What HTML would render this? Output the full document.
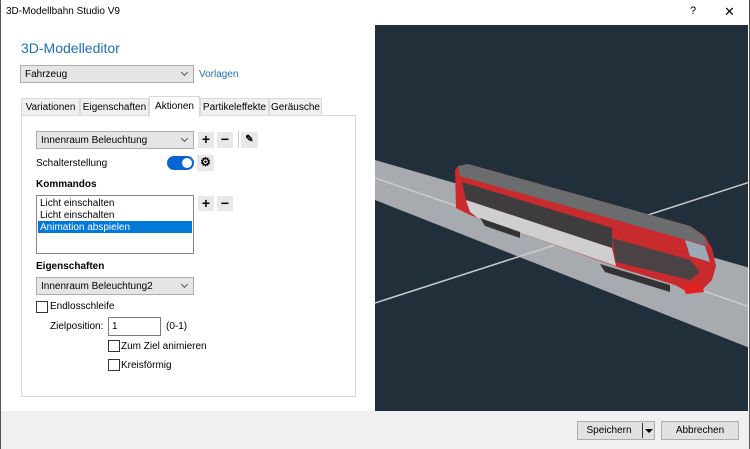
<!DOCTYPE html>
<html><head><meta charset="utf-8"><style>
*{box-sizing:border-box;margin:0;padding:0}
body{width:750px;height:449px;overflow:hidden;background:#fff;font-family:"Liberation Sans",sans-serif;font-size:10px;color:#000;position:relative}
.a{position:absolute;white-space:nowrap}
.combo{position:absolute;background:#e5e5e5;border:1px solid #adadad;padding:3px 4px;font-size:10px;line-height:11px}
.combo:after{content:"";position:absolute;right:6px;top:4px;width:4px;height:4px;border-right:1px solid #555;border-bottom:1px solid #555;transform:rotate(45deg)}
.btn{position:absolute;background:#e8e8e8;text-align:center;font-weight:bold;font-size:14px;line-height:15px}
.tab{position:absolute;top:98px;height:18px;border:1px solid #d9d9d9;border-bottom:none;background:#f0f0f0;padding:3px 0;text-align:center;font-size:10px}
.cb{position:absolute;width:12px;height:12px;border:1px solid #333;background:#fff}
.fb{position:absolute;top:421px;height:19px;border:1px solid #adadad;background:#e1e1e1;text-align:center;line-height:17px;font-size:10px}
</style></head><body>
<div class="a" style="left:0;top:0;width:750px;height:449px;border:1px solid #555;border-top:none"></div>
<div class="a" style="left:6px;top:6px;font-size:10px">3D-Modellbahn Studio V9</div>
<div class="a" style="left:690px;top:5px;font-size:11px">?</div>
<div class="a" style="left:724px;top:4px;font-size:13px">✕</div>
<div class="a" style="left:21px;top:40px;font-size:14px;color:#1e6fb8">3D-Modelleditor</div>
<div class="combo" style="left:20px;top:65px;width:174px;height:18px">Fahrzeug</div>
<div class="a" style="left:199px;top:69px;color:#1e6fb8">Vorlagen</div>
<div class="tab" style="left:21px;width:59px">Variationen</div>
<div class="tab" style="left:80px;width:69px">Eigenschaften</div>
<div class="tab" style="left:200px;width:69px">Partikeleffekte</div>
<div class="tab" style="left:269px;width:53px">Geräusche</div>
<div class="a" style="left:21px;top:115px;width:335px;height:282px;border:1px solid #d9d9d9;background:#fff"></div>
<div class="tab" style="left:149px;top:96px;width:51px;height:21px;background:#fff;z-index:2;padding-top:4px">Aktionen</div>
<div class="combo" style="left:36px;top:131px;width:158px;height:18px">Innenraum Beleuchtung</div>
<div class="btn" style="left:198px;top:132px;width:16px;height:16px">+</div>
<div class="btn" style="left:217px;top:132px;width:16px;height:16px">−</div>
<div class="a" style="left:238px;top:131px;width:1px;height:17px;background:#ccc"></div>
<div class="btn" style="left:241px;top:132px;width:17px;height:16px;font-size:10px">✎</div>
<div class="a" style="left:36px;top:158px">Schalterstellung</div>
<div class="a" style="left:167px;top:156px;width:27px;height:14px;border-radius:7px;background:#0a64d2"></div>
<div class="a" style="left:182px;top:158px;width:10px;height:10px;border-radius:5px;background:#fff"></div>
<div class="btn" style="left:197px;top:155px;width:17px;height:16px;font-size:12px">⚙</div>
<div class="a" style="left:36px;top:179px;font-weight:bold">Kommandos</div>
<div class="a" style="left:36px;top:195px;width:158px;height:59px;border:1px solid #828790;background:#fff"></div>
<div class="a" style="left:40px;top:198px">Licht einschalten</div>
<div class="a" style="left:40px;top:210px">Licht einschalten</div>
<div class="a" style="left:38px;top:221px;width:154px;height:12px;background:#0078d7"></div>
<div class="a" style="left:40px;top:222px;color:#fff">Animation abspielen</div>
<div class="btn" style="left:198px;top:196px;width:16px;height:15px">+</div>
<div class="btn" style="left:217px;top:196px;width:16px;height:15px">−</div>
<div class="a" style="left:36px;top:261px;font-weight:bold">Eigenschaften</div>
<div class="combo" style="left:36px;top:277px;width:158px;height:18px">Innenraum Beleuchtung2</div>
<div class="cb" style="left:36px;top:301px"></div>
<div class="a" style="left:50px;top:301px">Endlosschleife</div>
<div class="a" style="left:50px;top:321px">Zielposition:</div>
<div class="a" style="left:108px;top:317px;width:53px;height:19px;border:1px solid #7a7a7a;padding:3px 3px">1</div>
<div class="a" style="left:166px;top:321px">(0-1)</div>
<div class="cb" style="left:108px;top:340px"></div>
<div class="a" style="left:121px;top:341px">Zum Ziel animieren</div>
<div class="cb" style="left:108px;top:359px"></div>
<div class="a" style="left:121px;top:360px">Kreisförmig</div>
<div class="a" style="left:1px;top:411px;width:748px;height:38px;background:#f0f0f0"></div>
<svg class="a" style="left:375px;top:25px" width="373" height="386" viewBox="375 25 373 386">
<rect x="375" y="25" width="373" height="386" fill="#212f3b"/>
<polygon points="375,160 750,268 750,348 375,200" fill="#a7abaf"/>
<line x1="375" y1="303" x2="555" y2="245" stroke="#c8ccd0" stroke-width="1.5"/>
<line x1="555" y1="245" x2="750" y2="182" stroke="#c8ccd0" stroke-width="1.5"/>
<line x1="375" y1="178" x2="750" y2="307" stroke="#c8ccd0" stroke-width="1.5"/>
<polygon points="455,170 458,166 468,164 690,226 705,236 712,248 716,266 712,280 702,290 688,292 675,285 620,268 470,215 456,208" fill="#c82a2e"/>
<polygon points="458,166 468,164 690,226 704,236 708,246 460,176" fill="#6a6c6e"/>
<polygon points="462,182 612,228 612,248 466,200" fill="#3e3c3d"/>
<polygon points="466,200 612,248 616,266 478,218 470,212" fill="#cfcfcf"/>
<polygon points="612,238 690,260 700,272 690,280 616,262" fill="#4a4244"/>
<polygon points="685,240 705,246 710,262 690,256" fill="#9aaab8"/>
<polygon points="682,285 702,284 704,292 686,294" fill="#e42020"/>
<polygon points="480,218 520,232 520,238 485,226" fill="#333"/>
<polygon points="600,264 670,285 670,292 605,272" fill="#333"/>
</svg>
<div class="fb" style="left:577px;width:78px;padding-right:14px">Speichern</div>
<div class="a" style="left:642px;top:423px;width:1px;height:15px;background:#333"></div>
<div class="a" style="left:645px;top:429px;border-left:4px solid transparent;border-right:4px solid transparent;border-top:4px solid #000"></div>
<div class="fb" style="left:661px;width:78px">Abbrechen</div>
</body></html>
